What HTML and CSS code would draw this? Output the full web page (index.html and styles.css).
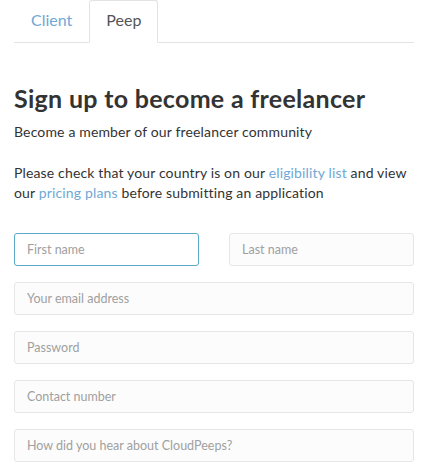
FILE: index.html
```html
<!DOCTYPE html>
<html>
<head>
<meta charset="utf-8">
<link rel="stylesheet" href="styles.css">
</head>
<body>
<div class="page">
  <ul class="tabs">
    <li class="tab"><a href="#">Client</a></li>
    <li class="tab active"><a href="#">Peep</a></li>
  </ul>
  <h1 class="title">Sign up to become a freelancer</h1>
  <p class="lead">Become a member of our freelancer community</p>
  <p class="info">Please check that your country is on our <a href="#">eligibility list</a> and view our <a href="#">pricing plans</a> before submitting an application</p>
  <form class="form">
    <div class="row two">
      <input class="field focus" type="text" placeholder="First name">
      <input class="field" type="text" placeholder="Last name">
    </div>
    <div class="row"><input class="field" type="email" placeholder="Your email address"></div>
    <div class="row"><input class="field" type="password" placeholder="Password"></div>
    <div class="row"><input class="field" type="text" placeholder="Contact number"></div>
    <div class="row"><input class="field" type="text" placeholder="How did you hear about CloudPeeps?"></div>
  </form>
</div>
</body>
</html>
```
FILE: styles.css
```css
* { box-sizing: border-box; }
html, body { margin: 0; padding: 0; background: #fff; }
body {
  font-family: Lato, "Open Sans", Arial, sans-serif;
  color: #333;
}
.page {
  width: 400px;
  margin-left: 14px;
}
.tabs {
  list-style: none;
  margin: 0;
  padding: 0;
  display: flex;
  border-bottom: 1px solid #e3e3e3;
  height: 43px;
}
.tab {
  margin-bottom: -1px;
}
.tab a {
  display: block;
  height: 43px;
  line-height: 38px;
  padding: 0 16px;
  font-size: 16px;
  text-decoration: none;
  color: #6fa8d6;
  border: 1px solid transparent;
  border-radius: 3px 3px 0 0;
}
.tab.active a {
  color: #555;
  background: #fff;
  border-color: #e3e3e3 #e3e3e3 #fff;
}
.title {
  margin: 40px 0 0;
  font-size: 25px;
  font-weight: 700;
  line-height: 30px;
  color: #333;
  letter-spacing: 0.3px;
}
.lead {
  margin: 9px 0 0;
  font-size: 14px;
  line-height: 20px;
  letter-spacing: 0.15px;
}
.info {
  margin: 21px 0 0;
  font-size: 14px;
  line-height: 20px;
  letter-spacing: 0.15px;
}
.info a { color: #6fa8d6; text-decoration: none; }
.form {
  margin-top: 30px;
  display: flex;
  flex-direction: column;
  gap: 16px;
}
.row { display: flex; }
.row.two { gap: 30px; }
.field {
  flex: 1;
  min-width: 0;
  height: 33px;
  padding: 0 12px;
  font-family: inherit;
  font-size: 12.5px;
  color: #333;
  background: #fcfcfc;
  border: 1px solid #e6e6e6;
  border-radius: 3px;
  outline: none;
}
.field::placeholder { color: #a0a0a0; }
.field.focus { border-color: #5aa9c9; background: #fff; }
```
